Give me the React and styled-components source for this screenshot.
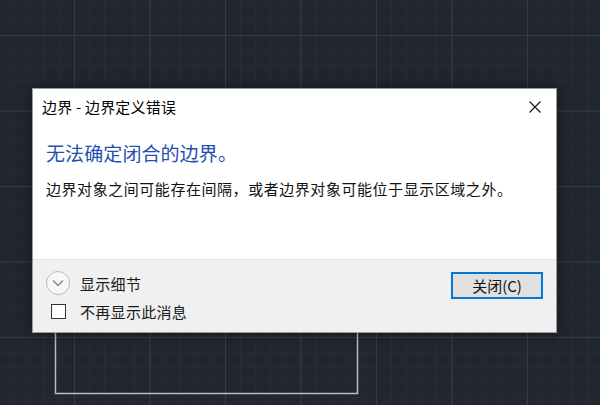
import React from "react";
import styled, { createGlobalStyle } from "styled-components";

const Global = createGlobalStyle`
  html, body { margin: 0; padding: 0; }
  body {
    width: 600px;
    height: 405px;
    overflow: hidden;
    font-family: "Noto Sans CJK SC", "Noto Sans", sans-serif;
  }
`;

const Canvas = styled.div`
  position: relative;
  width: 600px;
  height: 405px;
  background-color: #212630;
  background-image:
    linear-gradient(to right, #363c48 1px, transparent 1px),
    linear-gradient(to bottom, #363c48 1px, transparent 1px),
    linear-gradient(to right, #272c36 1px, transparent 1px),
    linear-gradient(to bottom, #272c36 1px, transparent 1px);
  background-size: 75.5px 75.5px, 75.5px 75.5px, 15.1px 15.1px, 15.1px 15.1px;
  background-position: 74px 35px, 74px 35px, 74px 35px, 74px 35px;
  overflow: hidden;
`;

const Drawing = styled.svg`
  position: absolute;
  left: 0;
  top: 0;
`;

const Dialog = styled.div`
  position: absolute;
  left: 32px;
  top: 88px;
  width: 525px;
  height: 245px;
  box-sizing: border-box;
  background: #ffffff;
  border: 1px solid #9a9a9a;
  box-shadow: 0 0 14px rgba(0, 0, 0, 0.45);
  display: flex;
  flex-direction: column;
`;

const TitleBar = styled.div`
  height: 35px;
  display: flex;
  align-items: center;
  justify-content: space-between;
  padding-left: 9px;
`;

const Title = styled.span`
  font-size: 15px;
  color: #000;
  letter-spacing: 0.2px;
`;

const CloseBox = styled.div`
  width: 42px;
  height: 35px;
  display: flex;
  align-items: center;
  justify-content: center;
`;

const Content = styled.div`
  height: 135px;
  padding: 16px 0 0 13px;
  box-sizing: border-box;
`;

const Heading = styled.div`
  font-size: 19px;
  line-height: 26px;
  color: #1f4fb0;
  letter-spacing: 0.1px;
`;

const Body = styled.div`
  margin-top: 13px;
  font-size: 15px;
  line-height: 20px;
  color: #111;
  letter-spacing: 0.55px;
`;

const Footer = styled.div`
  flex: 1;
  background: #f0f0f0;
  border-top: 1px solid #e2e2e2;
  display: flex;
  justify-content: space-between;
  align-items: flex-start;
  padding: 11px 13px 0 13px;
`;

const Options = styled.div`
  display: flex;
  flex-direction: column;
  gap: 4px;
`;

const OptionRow = styled.div`
  display: flex;
  align-items: center;
  gap: 10px;
  height: 24px;
`;

const IconSlot = styled.div`
  width: 24px;
  height: 24px;
  display: flex;
  align-items: center;
  justify-content: center;
`;

const Expander = styled.div`
  width: 22px;
  height: 22px;
  border-radius: 50%;
  border: 1px solid #b9b9b9;
  background: #f7f7f7;
  display: flex;
  align-items: center;
  justify-content: center;
`;

const Check = styled.div`
  width: 13px;
  height: 13px;
  border: 1px solid #333;
  background: #fff;
`;

const Label = styled.span`
  font-size: 15px;
  color: #1a1a1a;
  letter-spacing: 0.3px;
`;

const Button = styled.button`
  width: 92px;
  height: 27px;
  margin-top: 1px;
  box-sizing: border-box;
  border: 2px solid #0078d7;
  background: #e1e1e1;
  font-family: "Noto Sans CJK SC", "Noto Sans", sans-serif;
  font-size: 15px;
  color: #111;
  padding: 0;
  display: flex;
  align-items: center;
  justify-content: center;
  line-height: 1;
`;

export default function App() {
  return (
    <>
      <Global />
      <Canvas>
        <Drawing width="600" height="405">
          <polyline
            points="55.5,290 55.5,393.5 357.5,393.5 357.5,290"
            fill="none"
            stroke="#b9bdc3"
            strokeWidth="1.5"
          />
        </Drawing>
        <Dialog>
          <TitleBar>
            <Title>边界 - 边界定义错误</Title>
            <CloseBox>
              <svg width="12" height="12" viewBox="0 0 12 12">
                <path d="M0.5 0.5 L11.5 11.5 M11.5 0.5 L0.5 11.5" stroke="#111" strokeWidth="1.1" fill="none" />
              </svg>
            </CloseBox>
          </TitleBar>
          <Content>
            <Heading>无法确定闭合的边界。</Heading>
            <Body>边界对象之间可能存在间隔，或者边界对象可能位于显示区域之外。</Body>
          </Content>
          <Footer>
            <Options>
              <OptionRow>
                <IconSlot>
                  <Expander>
                    <svg width="12" height="8" viewBox="0 0 12 8">
                      <path d="M1 1.5 L6 6.5 L11 1.5" stroke="#7a7a7a" strokeWidth="1.2" fill="none" />
                    </svg>
                  </Expander>
                </IconSlot>
                <Label>显示细节</Label>
              </OptionRow>
              <OptionRow>
                <IconSlot>
                  <Check />
                </IconSlot>
                <Label>不再显示此消息</Label>
              </OptionRow>
            </Options>
            <Button>关闭(C)</Button>
          </Footer>
        </Dialog>
      </Canvas>
    </>
  );
}
